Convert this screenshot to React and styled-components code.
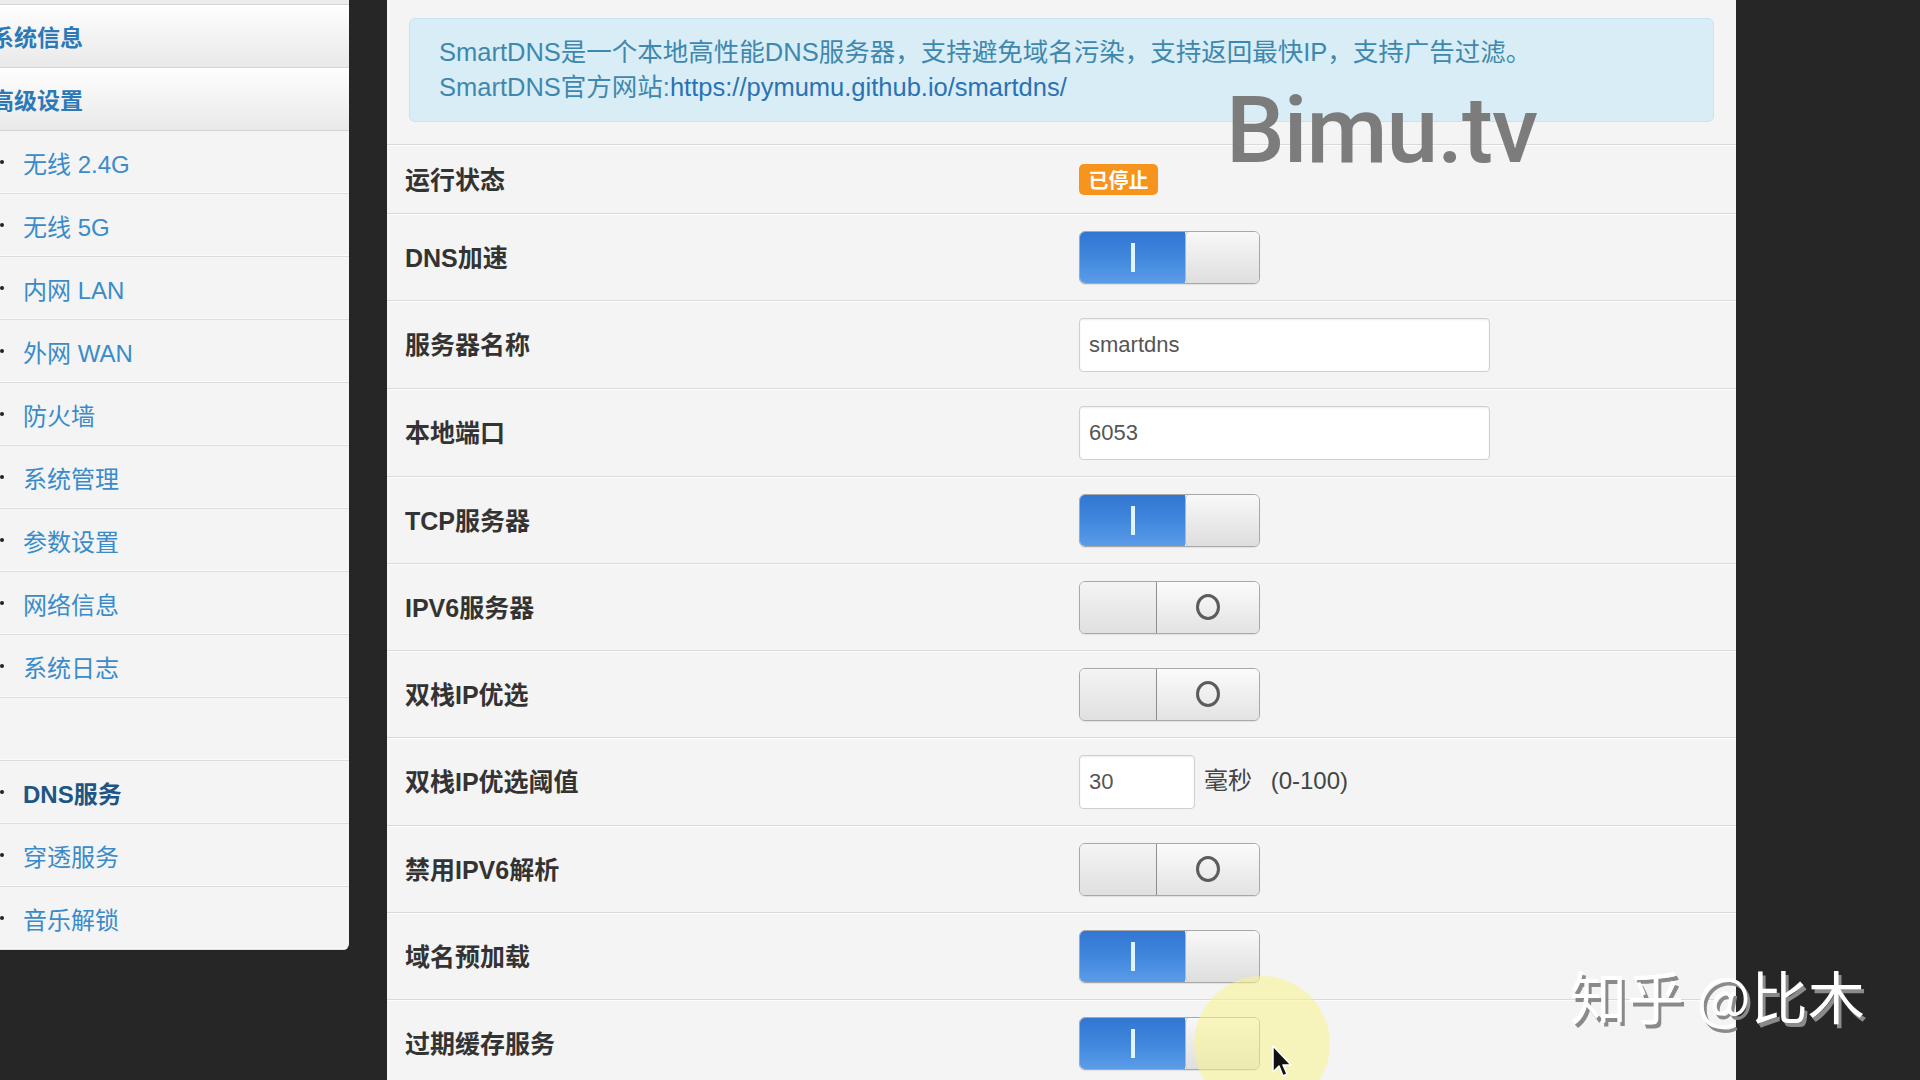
import React from 'react';
import styled, {createGlobalStyle} from 'styled-components';

const GlobalStyle = createGlobalStyle`
  body {
    margin: 0;
    background: #262626;
    font-family: "Liberation Sans", "Noto Sans CJK SC", sans-serif;
  }
`;

const Page = styled.div`
  position: relative;
  display: flex;
  align-items: flex-start;
  width: 1920px;
  height: 1080px;
  overflow: hidden;
  background: #262626;
`;

// ---- sidebar ----

const Sidebar = styled.div`
  width: 349px;
  flex-shrink: 0;
  background: #f4f4f4;
  border-bottom-right-radius: 6px;
  overflow: hidden;
`;

const TopSliver = styled.div`
  height: 4px;
  background: #ececec;
  border-bottom: 1px solid #d6d6d6;
`;

const SideHeader = styled.div`
  display: flex;
  align-items: center;
  height: 62px;
  margin-left: -9px;
  background: linear-gradient(#fefefe, #e9e9e9);
  border-bottom: 1px solid #d4d4d4;
  color: #2b79b6;
  font-size: 23px;
  font-weight: bold;
`;

const SideItem = styled.div`
  display: flex;
  align-items: center;
  gap: 19px;
  height: 62px;
  border-bottom: 1px solid #dcdcdc;
  box-shadow: inset 0 -1px 0 #fbfbfb;
  color: ${p => (p.$active ? '#1d5685' : '#3a8bca')};
  font-size: 24px;
  font-weight: ${p => (p.$active ? 'bold' : 'normal')};
`;

const Bullet = styled.span`
  width: 4px;
  height: 4px;
  background: ${p => (p.$hidden ? 'transparent' : '#222')};
  border-radius: 50%;
`;

// ---- main panel ----

const Panel = styled.div`
  width: 1349px;
  height: 1080px;
  margin-left: 38px;
  flex-shrink: 0;
  background: #f4f4f4;
  overflow: hidden;
`;

const InfoBox = styled.div`
  margin: 18px 22px 0 22px;
  height: 104px;
  box-sizing: border-box;
  padding: 16px 0 0 29px;
  background: #d9edf7;
  border: 1px solid #c3e4f1;
  border-radius: 6px;
  color: #3f88ad;
  font-size: 25.5px;
  line-height: 35px;
`;

const Link = styled.span`
  color: #2b72b3;
`;

const Rows = styled.div`
  margin-top: 22px;
`;

const Row = styled.div`
  display: flex;
  align-items: center;
  box-sizing: border-box;
  height: ${p => p.$h}px;
  padding-left: 18px;
  border-top: 1px solid #d9d9d9;
  box-shadow: inset 0 1px 0 #fcfcfc;
`;

const Label = styled.div`
  width: 674px;
  flex-shrink: 0;
  margin-top: -3px;
  color: #333;
  font-size: 25px;
  font-weight: bold;
`;

const Badge = styled.span`
  display: inline-flex;
  align-items: center;
  justify-content: center;
  width: 79px;
  height: 31px;
  background: #f7941d;
  border-radius: 5px;
  color: #fff;
  font-size: 20px;
  font-weight: bold;
`;

const Switch = styled.div`
  display: flex;
  width: 181px;
  height: 53px;
  box-sizing: border-box;
  border: 1px solid #a8a8a8;
  border-radius: 6px;
  overflow: hidden;
  box-shadow: 0 1px 1px rgba(0, 0, 0, 0.08);
`;

const OnPart = styled.div`
  display: flex;
  align-items: center;
  justify-content: center;
  width: 105px;
  background: linear-gradient(#3276d2, #3f86dc 48%, #5b9ce8);
`;

const OnBar = styled.div`
  width: 4px;
  height: 29px;
  background: #e2f5ff;
`;

const OnKnob = styled.div`
  flex: 1;
  background: linear-gradient(#f8f8f8, #dedede);
  border-left: 1px solid #b4b4b4;
  border-radius: 4px 0 0 4px;
`;

const OffPart = styled.div`
  width: 76px;
  background: linear-gradient(#f4f4f4, #e0e0e0);
  border-right: 1px solid #8e8e8e;
`;

const OffKnob = styled.div`
  display: flex;
  align-items: center;
  justify-content: center;
  flex: 1;
  background: linear-gradient(#fbfbfb, #e3e3e3);
`;

const Ring = styled.div`
  width: 18px;
  height: 20px;
  border: 3px solid #5c5c5c;
  border-radius: 50%;
`;

const Input = styled.input`
  width: ${p => p.$w}px;
  height: 54px;
  box-sizing: border-box;
  padding: 0 9px;
  border: 1px solid #cfcfcf;
  border-radius: 4px;
  background: #fff;
  box-shadow: inset 0 1px 2px rgba(0, 0, 0, 0.08);
  color: #555;
  font-family: "Liberation Sans", sans-serif;
  font-size: 22px;
  outline: none;
`;

const Unit = styled.span`
  margin-left: 9px;
  margin-top: -6px;
  color: #444;
  font-size: 24px;
  word-spacing: 12px;
`;

// ---- overlays ----

const Bimu = styled.div`
  position: absolute;
  left: 1226px;
  top: 84px;
  color: #7c7c7c;
  font-family: Roboto, "Liberation Sans", sans-serif;
  font-size: 93px;
  font-weight: 500;
  line-height: 1;
  letter-spacing: -1px;
`;

const Zhihu = styled.div`
  position: absolute;
  left: 1570px;
  top: 966px;
  color: #fff;
  font-family: "Noto Sans CJK SC", sans-serif;
  font-size: 57px;
  line-height: 1;
  text-shadow: 3px 4px 0 #8a8a8a;
  white-space: nowrap;
`;

const Highlight = styled.div`
  position: absolute;
  left: 1194px;
  top: 976px;
  width: 136px;
  height: 136px;
  border-radius: 50%;
  background: rgba(250, 244, 140, 0.55);
`;

const Cursor = styled.svg`
  position: absolute;
  left: 1272px;
  top: 1045px;
`;

const Toggle = ({on}) => (
  on ? (
    <Switch>
      <OnPart><OnBar /></OnPart>
      <OnKnob />
    </Switch>
  ) : (
    <Switch>
      <OffPart />
      <OffKnob><Ring /></OffKnob>
    </Switch>
  )
);

const menu = [
  {name: '无线 2.4G'},
  {name: '无线 5G'},
  {name: '内网 LAN'},
  {name: '外网 WAN'},
  {name: '防火墙'},
  {name: '系统管理'},
  {name: '参数设置'},
  {name: '网络信息'},
  {name: '系统日志'},
  {name: '', empty: true},
  {name: 'DNS服务', active: true},
  {name: '穿透服务'},
  {name: '音乐解锁'},
];

const App = () => {
  return (
    <Page>
      <GlobalStyle />
      <Sidebar>
        <TopSliver />
        <SideHeader>系统信息</SideHeader>
        <SideHeader>高级设置</SideHeader>
        {menu.map((item, i) => (
          <SideItem key={i} $active={item.active}>
            <Bullet $hidden={item.empty} />
            {item.name}
          </SideItem>
        ))}
      </Sidebar>

      <Panel>
        <InfoBox>
          <div>SmartDNS是一个本地高性能DNS服务器，支持避免域名污染，支持返回最快IP，支持广告过滤。</div>
          <div>SmartDNS官方网站:<Link>https://pymumu.github.io/smartdns/</Link></div>
        </InfoBox>
        <Rows>
          <Row $h={69}>
            <Label>运行状态</Label>
            <Badge>已停止</Badge>
          </Row>
          <Row $h={87}>
            <Label>DNS加速</Label>
            <Toggle on />
          </Row>
          <Row $h={88}>
            <Label>服务器名称</Label>
            <Input $w={411} value="smartdns" readOnly />
          </Row>
          <Row $h={88}>
            <Label>本地端口</Label>
            <Input $w={411} value="6053" readOnly />
          </Row>
          <Row $h={87}>
            <Label>TCP服务器</Label>
            <Toggle on />
          </Row>
          <Row $h={87}>
            <Label>IPV6服务器</Label>
            <Toggle />
          </Row>
          <Row $h={87}>
            <Label>双栈IP优选</Label>
            <Toggle />
          </Row>
          <Row $h={88}>
            <Label>双栈IP优选阈值</Label>
            <Input $w={116} value="30" readOnly />
            <Unit>毫秒 (0-100)</Unit>
          </Row>
          <Row $h={87}>
            <Label>禁用IPV6解析</Label>
            <Toggle />
          </Row>
          <Row $h={87}>
            <Label>域名预加载</Label>
            <Toggle on />
          </Row>
          <Row $h={87}>
            <Label>过期缓存服务</Label>
            <Toggle on />
          </Row>
        </Rows>
      </Panel>

      <Bimu>Bimu.tv</Bimu>
      <Highlight />
      <Cursor width="22" height="34" viewBox="0 0 22 34">
        <path d="M1 1 L1 27 L7 21 L11 31 L15 29 L11 20 L19 20 Z" fill="#111" stroke="#fff" strokeWidth="1.5" strokeLinejoin="round" />
      </Cursor>
      <Zhihu>知乎 @比木</Zhihu>
    </Page>
  );
};

export default App;
